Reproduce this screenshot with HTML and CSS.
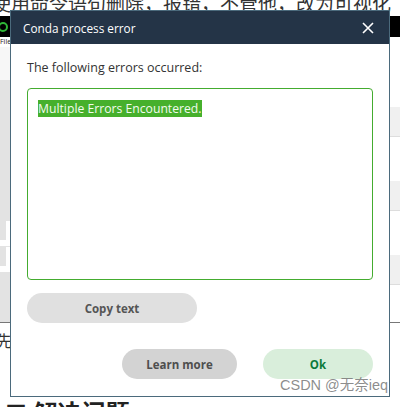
FILE: index.html
```html
<!DOCTYPE html>
<html lang="en">
  <head>
    <meta charset="UTF-8" />
    <meta name="viewport" content="width=device-width, initial-scale=1.0" />
    <title>Conda process error</title>
    <link rel="stylesheet" href="styles.css">
  </head>
  <body>
    <div class="page">
      <p class="top_line">使用命令语句删除，报错，不管他，改为可视化</p>
      <div class="nav_bar"><span class="ring"></span></div>
      <div class="menu_row">File</div>
      <div class="shot">
        <div class="shot_left">
          <div class="gap_a"></div>
          <div class="pane"></div>
          <div class="white_bit"></div>
          <div class="white_bit"></div>
          <div class="pane_end"></div>
        </div>
        <div class="shot_right">
          <div class="line_r"></div>
          <div class="line_r"></div>
          <div class="line_r"></div>
        </div>
      </div>
      <p class="next_line">先</p>
      <h2 class="heading">二 解决问题</h2>
    </div>

    <div class="dialog">
      <div class="dialog_head">
        <span class="dialog_title">Conda process error</span>
        <svg class="close" width="12" height="12" viewBox="0 0 12 12">
          <path d="M1 1 L11 11 M11 1 L1 11" stroke="#fff" stroke-width="1.6" fill="none" />
        </svg>
      </div>
      <div class="dialog_body">
        <p class="msg">The following errors occurred:</p>
        <div class="err_box"><span class="sel">Multiple Errors Encountered.</span></div>
        <button class="btn btn_copy">Copy text</button>
        <div class="actions">
          <button class="btn btn_learn">Learn more</button>
          <button class="btn btn_ok">Ok</button>
        </div>
      </div>
    </div>

    <div class="watermark">CSDN @无奈ieq</div>
  </body>
</html>
```

FILE: styles.css
```css
* {
  box-sizing: border-box;
}
body {
  margin: 0;
  width: 400px;
  height: 407px;
  overflow: hidden;
  position: relative;
  background: #fff;
  font-family: "Open Sans", "Noto Sans CJK SC", sans-serif;
}

/* page behind the dialog */
.page {
  display: flex;
  flex-direction: column;
}
.top_line {
  margin: -9px 0 0 -8px;
  height: 25px;
  font-size: 19px;
  line-height: 24px;
  color: #333;
  white-space: nowrap;
  font-family: "Noto Sans CJK SC", sans-serif;
}
.nav_bar {
  height: 21px;
  background: #000;
  display: flex;
  align-items: center;
}
.ring {
  width: 10px;
  height: 10px;
  border: 2px solid #2fb536;
  border-radius: 50%;
  margin-left: -2px;
}
.menu_row {
  height: 10px;
  font-size: 7px;
  line-height: 10px;
  color: #222;
}
.shot {
  height: 276px;
  display: flex;
  justify-content: space-between;
  border-bottom: 1px solid #777;
}
.shot_left {
  width: 12px;
  display: flex;
  flex-direction: column;
}
.gap_a {
  height: 33px;
  background: #f7f7f7;
}
.pane {
  height: 140px;
  background: #e3e3e3;
}
.white_bit {
  height: 20px;
  background: #fff;
  border-top: 1px solid #e3e3e3;
  margin-bottom: 6px;
  border-left: 6px solid #e3e3e3;
}
.pane_end {
  flex-grow: 1;
  background: #e3e3e3;
}
.shot_right {
  width: 12px;
  display: flex;
  flex-direction: column;
  padding-top: 60px;
  gap: 44px;
}
.line_r {
  height: 30px;
  background: #f0f0f0;
  border-bottom: 1px solid #ddd;
}
.next_line {
  margin: 7px 0 0 -4px;
  font-size: 16px;
  line-height: 20px;
  color: #333;
  font-family: "Noto Sans CJK SC", sans-serif;
}
.heading {
  margin: 48px 0 0 4px;
  font-size: 24px;
  line-height: 28px;
  color: #222;
  font-family: "Noto Sans CJK SC", sans-serif;
}

/* dialog */
.dialog {
  position: absolute;
  left: 10px;
  top: 10px;
  width: 380px;
  height: 387px;
  background: #fff;
  border: 1px solid #4b6a7c;
  display: flex;
  flex-direction: column;
}
.dialog_head {
  height: 33px;
  background: #243447;
  display: flex;
  align-items: center;
  justify-content: space-between;
  padding: 0 15px 0 12px;
}
.dialog_title {
  color: #fff;
  font-size: 11.8px;
}
.dialog_body {
  flex-grow: 1;
  padding: 15px 16px 0 16px;
  display: flex;
  flex-direction: column;
}
.msg {
  margin: 0 0 11px 0;
  font-size: 12.5px;
  line-height: 18px;
  color: #333;
}
.err_box {
  height: 192px;
  border: 1px solid #44ac2f;
  border-radius: 4px;
  padding: 7px 10px;
}
.sel {
  background: #46b02c;
  color: #f3fbef;
  font-size: 12.2px;
  line-height: 17px;
  display: inline-block;
}
.btn {
  border: none;
  border-radius: 15px;
  height: 30px;
  font-family: "Open Sans", sans-serif;
  font-weight: 700;
  font-size: 11.5px;
  padding: 0;
}
.btn_copy {
  width: 170px;
  margin-top: 13px;
  background: #e0e0e0;
  color: #555;
}
.actions {
  margin-top: 26px;
  display: flex;
  justify-content: flex-end;
  gap: 26px;
}
.btn_learn {
  width: 115px;
  background: #d3d3d3;
  color: #4e4e4e;
}
.btn_ok {
  width: 110px;
  background: #d9eedb;
  color: #0b7a3a;
}
.watermark {
  position: absolute;
  left: 280px;
  top: 376px;
  font-family: "Liberation Sans", "Noto Sans CJK SC", sans-serif;
  font-size: 14.5px;
  line-height: 18px;
  color: rgba(120, 120, 120, 0.85);
}
```
